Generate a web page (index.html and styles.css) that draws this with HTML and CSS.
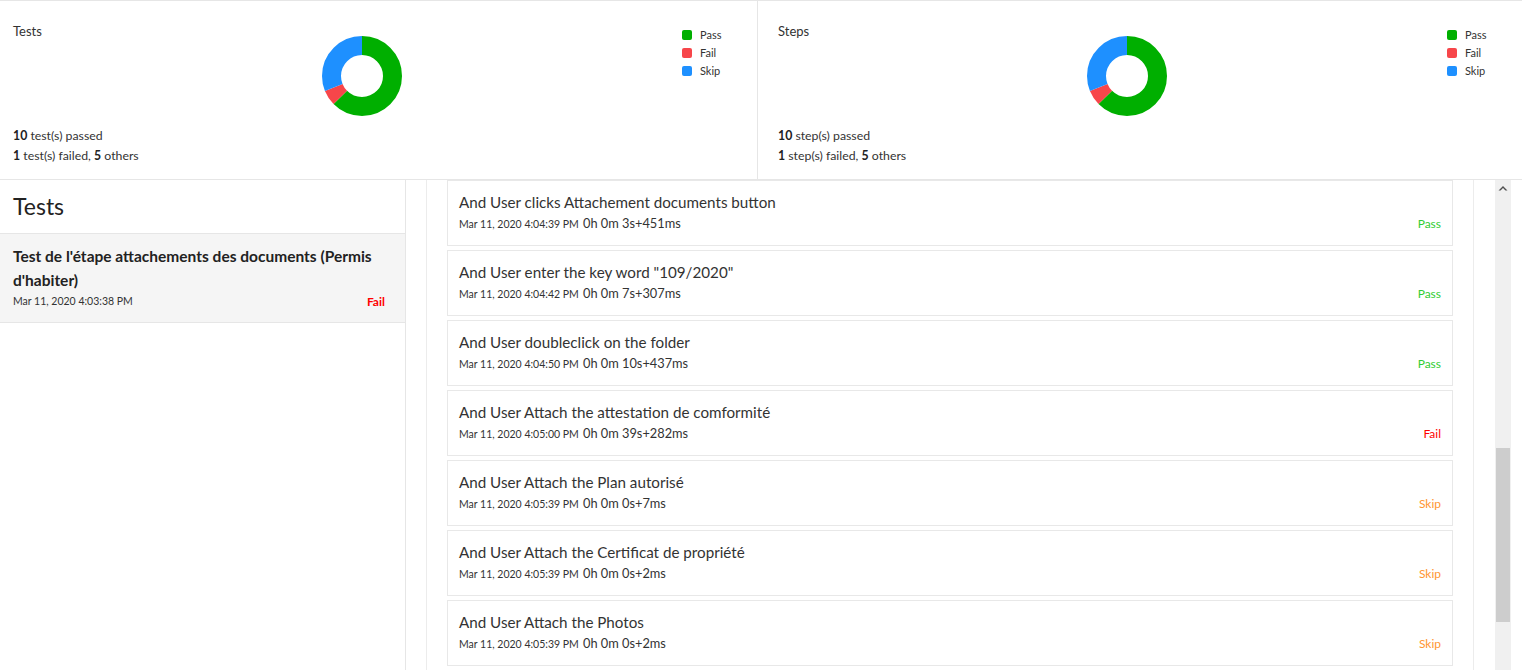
FILE: index.html
```html
<!DOCTYPE html>
<html lang="en">
<head>
<meta charset="utf-8">
<title>Report</title>
<link rel="stylesheet" href="styles.css">
</head>
<body>
<section class="dashboard">
  <div class="panel">
    <div class="panel-text">
      <div class="panel-title">Tests</div>
      <div class="panel-foot">
        <div><b>10</b> test(s) passed</div>
        <div><b>1</b> test(s) failed, <b>5</b> others</div>
      </div>
    </div>
    <svg class="donut" width="80" height="80" viewBox="0 0 80 80">
      <g transform="rotate(-90 40 40)">
        <circle cx="40" cy="40" r="30.5" fill="none" stroke="#00af00" stroke-width="19" stroke-dasharray="119.77 191.64"/>
        <circle cx="40" cy="40" r="30.5" fill="none" stroke="#f7464a" stroke-width="19" stroke-dasharray="0 119.77 11.98 191.64"/>
        <circle cx="40" cy="40" r="30.5" fill="none" stroke="#1e90ff" stroke-width="19" stroke-dasharray="0 131.75 59.89 191.64"/>
      </g>
    </svg>
    <div></div>
    <ul class="legend">
      <li><span class="sw sw-pass"></span>Pass</li>
      <li><span class="sw sw-fail"></span>Fail</li>
      <li><span class="sw sw-skip"></span>Skip</li>
    </ul>
  </div>
  <div class="panel panel-second">
    <div class="panel-text">
      <div class="panel-title">Steps</div>
      <div class="panel-foot">
        <div><b>10</b> step(s) passed</div>
        <div><b>1</b> step(s) failed, <b>5</b> others</div>
      </div>
    </div>
    <svg class="donut" width="80" height="80" viewBox="0 0 80 80">
      <g transform="rotate(-90 40 40)">
        <circle cx="40" cy="40" r="30.5" fill="none" stroke="#00af00" stroke-width="19" stroke-dasharray="119.77 191.64"/>
        <circle cx="40" cy="40" r="30.5" fill="none" stroke="#f7464a" stroke-width="19" stroke-dasharray="0 119.77 11.98 191.64"/>
        <circle cx="40" cy="40" r="30.5" fill="none" stroke="#1e90ff" stroke-width="19" stroke-dasharray="0 131.75 59.89 191.64"/>
      </g>
    </svg>
    <div></div>
    <ul class="legend">
      <li><span class="sw sw-pass"></span>Pass</li>
      <li><span class="sw sw-fail"></span>Fail</li>
      <li><span class="sw sw-skip"></span>Skip</li>
    </ul>
  </div>
</section>

<section class="main">
  <aside class="test-list">
    <h2 class="list-head">Tests</h2>
    <div class="test-item">
      <div class="test-name">Test de l'étape attachements des documents (Permis d'habiter)</div>
      <div class="test-meta">
        <span class="date">Mar 11, 2020 4:03:38 PM</span>
        <span class="status-fail-bold">Fail</span>
      </div>
    </div>
  </aside>

  <div class="detail">
    <div class="steps">
      <div class="step">
        <div class="step-name">And User clicks Attachement documents button</div>
        <div class="step-meta"><span><span class="date">Mar 11, 2020 4:04:39 PM</span> <span class="dur">0h 0m 3s+451ms</span></span><span class="st pass">Pass</span></div>
      </div>
      <div class="step">
        <div class="step-name">And User enter the key word "109/2020"</div>
        <div class="step-meta"><span><span class="date">Mar 11, 2020 4:04:42 PM</span> <span class="dur">0h 0m 7s+307ms</span></span><span class="st pass">Pass</span></div>
      </div>
      <div class="step">
        <div class="step-name">And User doubleclick on the folder</div>
        <div class="step-meta"><span><span class="date">Mar 11, 2020 4:04:50 PM</span> <span class="dur">0h 0m 10s+437ms</span></span><span class="st pass">Pass</span></div>
      </div>
      <div class="step">
        <div class="step-name">And User Attach the attestation de comformité</div>
        <div class="step-meta"><span><span class="date">Mar 11, 2020 4:05:00 PM</span> <span class="dur">0h 0m 39s+282ms</span></span><span class="st fail">Fail</span></div>
      </div>
      <div class="step">
        <div class="step-name">And User Attach the Plan autorisé</div>
        <div class="step-meta"><span><span class="date">Mar 11, 2020 4:05:39 PM</span> <span class="dur">0h 0m 0s+7ms</span></span><span class="st skip">Skip</span></div>
      </div>
      <div class="step">
        <div class="step-name">And User Attach the Certificat de propriété</div>
        <div class="step-meta"><span><span class="date">Mar 11, 2020 4:05:39 PM</span> <span class="dur">0h 0m 0s+2ms</span></span><span class="st skip">Skip</span></div>
      </div>
      <div class="step">
        <div class="step-name">And User Attach the Photos</div>
        <div class="step-meta"><span><span class="date">Mar 11, 2020 4:05:39 PM</span> <span class="dur">0h 0m 0s+2ms</span></span><span class="st skip">Skip</span></div>
      </div>
    </div>
    <div class="scrollbar">
      <div class="sb-arrow">
        <svg width="16" height="16" viewBox="0 0 16 16"><path d="M3.5 10.5 L8 6 L12.5 10.5 L10.5 10.5 L8 8 L5.5 10.5 Z" fill="#505050"/></svg>
      </div>
      <div class="sb-thumb"></div>
    </div>
  </div>
</section>
</body>
</html>
```

FILE: styles.css
```css
* { box-sizing: border-box; }
html, body { margin: 0; padding: 0; }
body {
  width: 1522px;
  height: 670px;
  overflow: hidden;
  font-family: Lato, "Open Sans", "Liberation Sans", sans-serif;
  color: #333;
  background: #fff;
}
b { font-weight: 700; color: #222; }

.dashboard {
  display: grid;
  grid-template-columns: 758px 1fr;
  height: 180px;
  border-top: 1px solid #e6e6e6;
  border-bottom: 1px solid #e6e6e6;
}
.panel {
  display: grid;
  grid-template-columns: 309px 80px 280px 1fr;
  padding: 21px 0 12px 13px;
  border-right: 1px solid #e6e6e6;
}
.panel-second { padding-left: 20px; border-right: 0; }
.panel-text {
  display: flex;
  flex-direction: column;
  justify-content: space-between;
}
.panel-title { font-size: 13px; line-height: 18px; color: #333; }
.panel-foot { font-size: 12.3px; line-height: 20px; margin-bottom: 1px; }
.donut { margin-top: 14px; display: block; }
.legend {
  list-style: none;
  margin: 4px 0 0;
  padding: 0;
  font-size: 11px;
  line-height: 18px;
}
.legend li { display: flex; align-items: center; }
.sw {
  display: inline-block;
  width: 10px;
  height: 10px;
  border-radius: 2px;
  margin-right: 8px;
}
.sw-pass { background: #00af00; }
.sw-fail { background: #f7464a; }
.sw-skip { background: #1e90ff; }

.main { display: flex; height: 490px; }
.test-list {
  width: 406px;
  flex: none;
  border-right: 1px solid #e6e6e6;
}
.list-head {
  margin: 0;
  font-weight: 400;
  font-size: 23px;
  line-height: 28px;
  padding: 12px 13px 13px;
  border-bottom: 1px solid #e6e6e6;
  color: #222;
}
.test-item {
  background: #f5f5f5;
  padding: 10px 20px 12px 13px;
  border-bottom: 1px solid #e6e6e6;
}
.test-name { font-weight: 700; font-size: 15.5px; line-height: 24px; color: #222; }
.test-meta {
  display: flex;
  justify-content: space-between;
  align-items: center;
  height: 18px;
}
.date { font-size: 10.5px; color: #333; }
.status-fail-bold { color: #f00; font-weight: 700; font-size: 12px; }

.detail { flex: 1; display: flex; }
.steps {
  flex: 1;
  margin-left: 20px;
  margin-right: 21px;
  padding: 0 20px;
  border-left: 1px solid #ececec;
  border-right: 1px solid #ececec;
  overflow: hidden;
}
.step {
  height: 66px;
  margin-bottom: 4px;
  border: 1px solid #e8e8e8;
  padding: 11px 11px 0;
}
.step-name { font-size: 15.2px; line-height: 20px; color: #333; }
.step-meta {
  display: flex;
  justify-content: space-between;
  align-items: baseline;
  line-height: 19px;
}
.dur { font-size: 12.8px; color: #333; }
.st { font-size: 12px; }
.pass { color: #32cd32; }
.fail { color: #f00; }
.skip { color: #ff9633; }

.scrollbar {
  width: 16px;
  flex: none;
  margin-right: 11px;
  background: #f0f0f0;
}
.sb-arrow { height: 17px; display: flex; align-items: flex-start; }
.sb-thumb {
  margin: 251px 1px 0;
  height: 174px;
  background: #cdcdcd;
}
```
